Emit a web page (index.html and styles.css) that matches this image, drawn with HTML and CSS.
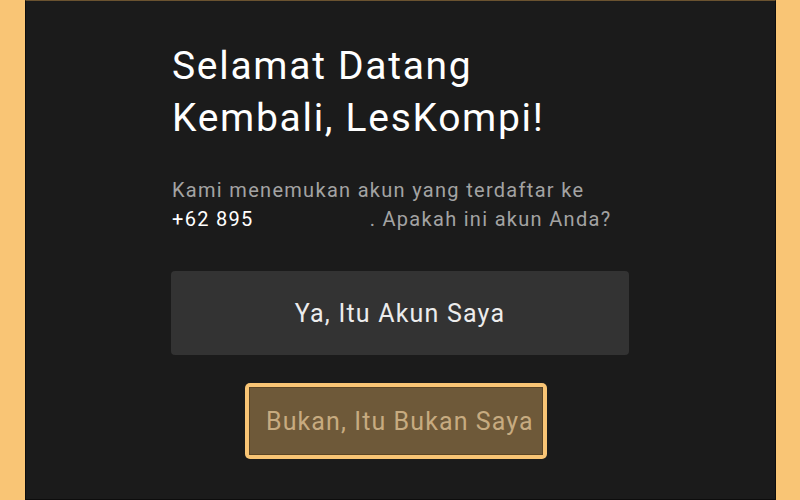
FILE: index.html
```html
<!DOCTYPE html>
<html lang="id">
<head>
<meta charset="utf-8">
<link rel="stylesheet" href="styles.css">
</head>
<body>
<div class="screen">
  <div class="content">
    <h1 class="title">Selamat Datang<br>Kembali, LesKompi!</h1>
    <p class="desc">Kami menemukan akun yang terdaftar ke<br><span class="phone">+62 895</span><span class="hidden-num"></span>. Apakah ini akun Anda?</p>
    <button class="btn btn-yes">Ya, Itu Akun Saya</button>
    <button class="btn btn-no"><span class="btn-no-inner">Bukan, Itu Bukan Saya</span></button>
  </div>
</div>
</body>
</html>
```

FILE: styles.css
```css
html, body {
  margin: 0;
  padding: 0;
  background: #f9c575;
  font-family: Roboto, "Noto Sans", sans-serif;
}
.screen {
  box-sizing: border-box;
  width: 751px;
  height: 500px;
  margin-left: 25px;
  background: #1b1b1b;
  border: 1px solid #0d0d0d;
  border-top-color: #6b5330;
  overflow: hidden;
}
.content {
  display: flex;
  flex-direction: column;
  align-items: flex-start;
  padding: 39px 0 0 146px;
}
.title {
  margin: 0;
  font-weight: 400;
  font-size: 39px;
  line-height: 52px;
  letter-spacing: 1.7px;
  color: #ffffff;
}
.desc {
  margin: 32px 0 0 0;
  font-size: 20px;
  line-height: 29px;
  letter-spacing: 1.3px;
  color: #a3a3a3;
}
.phone {
  color: #ffffff;
}
.hidden-num {
  display: inline-block;
  width: 116px;
}
.btn {
  font-family: Roboto, "Noto Sans", sans-serif;
  cursor: pointer;
}
.btn-yes {
  margin-top: 37px;
  margin-left: -1px;
  width: 458px;
  height: 84px;
  background: #333333;
  border: none;
  border-radius: 4px;
  color: #ececec;
  font-size: 25px;
  letter-spacing: 1.2px;
  padding: 0;
}
.btn-no {
  margin-top: 28px;
  margin-left: 73px;
  width: 302px;
  height: 76px;
  padding: 0;
  background: #f9c575;
  border: none;
  border-radius: 5px;
  display: flex;
}
.btn-no-inner {
  flex: 1;
  margin: 4px;
  display: flex;
  align-items: center;
  padding-left: 16px;
  background: #6e5939;
  border: 1px solid #5a4526;
  color: #c7ab80;
  font-size: 25px;
  letter-spacing: 1.1px;
  white-space: nowrap;
  overflow: hidden;
}
```
